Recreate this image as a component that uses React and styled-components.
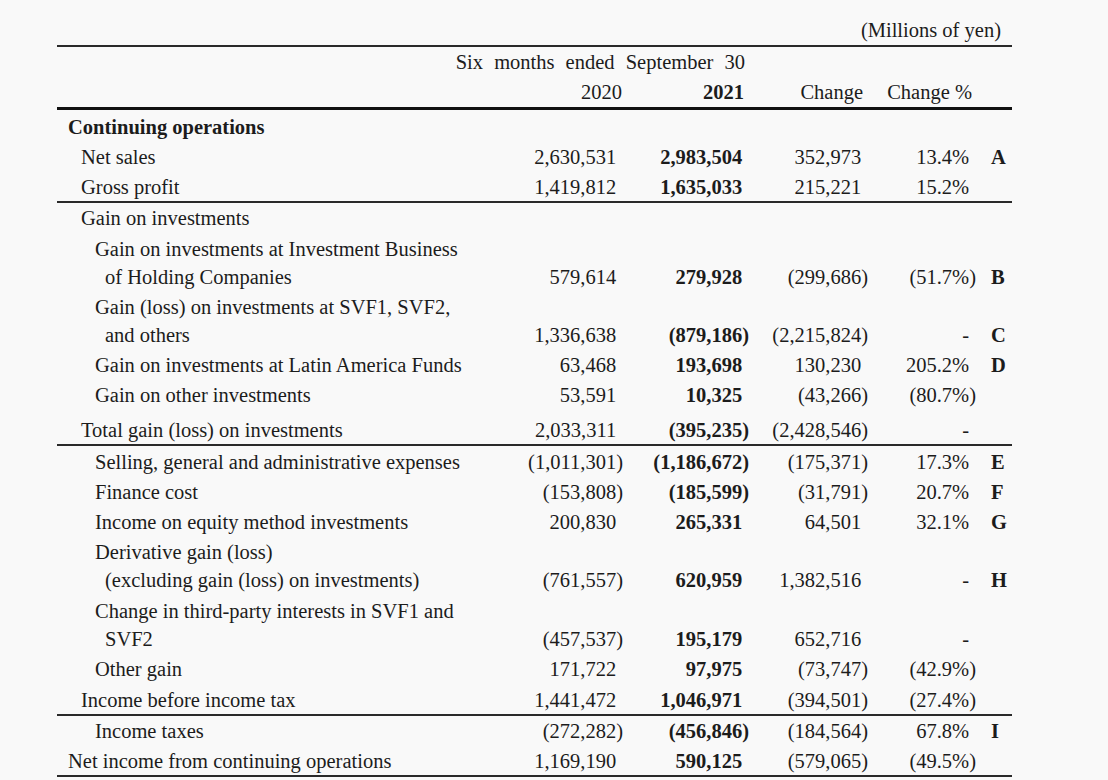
import React from 'react'
import styled, { createGlobalStyle } from 'styled-components'

const GlobalStyle = createGlobalStyle`
  html, body {
    margin: 0;
    background: #f9f9f9;
  }
  body {
    font-family: "Liberation Serif", "Times New Roman", serif;
    color: #1c1c1c;
  }
`

const Page = styled.div`
  width: 1108px;
  height: 780px;
  padding: 15px 0 0 57px;
  box-sizing: border-box;
  overflow: hidden;
  font-size: 20.5px;
`

const Unit = styled.div`
  width: 955px;
  box-sizing: border-box;
  padding-right: 11px;
  text-align: right;
  line-height: 30px;
`

const Table = styled.table`
  width: 955px;
  table-layout: fixed;
  border-collapse: collapse;
  border-top: 2px solid #2a2a2a;
`

const HeadRow = styled.tr`
  border-bottom: ${props => (props.$thick ? '3px solid #111' : 'none')};
`

const HeadCell = styled.th`
  padding: 0 ${props => props.$pad || 0}px 0 0;
  line-height: 30px;
  text-align: right;
  font-weight: ${props => (props.$bold ? 700 : 400)};
  word-spacing: ${props => props.$spread || 0}px;
  white-space: nowrap;
`

const Row = styled.tr`
  border-bottom: ${props => (props.$rule ? '2px solid #2a2a2a' : 'none')};

  & > td {
    padding-top: ${props => 1 + (props.$top || 0)}px;
    padding-bottom: ${props => (props.$rule ? 0 : 1)}px;
  }
`

const LEVEL_PAD = [11, 24, 38]

const LabelCell = styled.td`
  padding-left: ${props => LEVEL_PAD[props.$level] + 10}px;
  text-indent: -10px;
  line-height: 28px;
  vertical-align: bottom;
  font-weight: ${props => (props.$bold ? 700 : 400)};
  white-space: nowrap;
`

const NumCell = styled.td`
  padding: 0;
  line-height: 28px;
  text-align: right;
  vertical-align: bottom;
  font-weight: ${props => (props.$bold ? 700 : 400)};
  white-space: nowrap;
`

const Spacer = styled.span`
  visibility: hidden;
`

const NoteCell = styled.td`
  padding: 0 0 0 15px;
  line-height: 28px;
  vertical-align: bottom;
  font-weight: 700;
`

const ROWS = [
  { label: 'Continuing operations', level: 0, bold: true, top: 2 },
  { label: 'Net sales', level: 1, v: ['2,630,531', '2,983,504', '352,973', '13.4%'], note: 'A' },
  { label: 'Gross profit', level: 1, v: ['1,419,812', '1,635,033', '215,221', '15.2%'], rule: true },
  { label: 'Gain on investments', level: 1, top: 0 },
  {
    label: ['Gain on investments at Investment Business', 'of Holding Companies'],
    level: 2,
    v: ['579,614', '279,928', '(299,686)', '(51.7%)'],
    note: 'B',
    top: 1,
  },
  {
    label: ['Gain (loss) on investments at SVF1, SVF2,', 'and others'],
    level: 2,
    v: ['1,336,638', '(879,186)', '(2,215,824)', '-'],
    note: 'C',
  },
  { label: 'Gain on investments at Latin America Funds', level: 2, v: ['63,468', '193,698', '130,230', '205.2%'], note: 'D' },
  { label: 'Gain on other investments', level: 2, v: ['53,591', '10,325', '(43,266)', '(80.7%)'] },
  { label: 'Total gain (loss) on investments', level: 1, v: ['2,033,311', '(395,235)', '(2,428,546)', '-'], top: 5, rule: true },
  {
    label: 'Selling, general and administrative expenses',
    level: 2,
    v: ['(1,011,301)', '(1,186,672)', '(175,371)', '17.3%'],
    note: 'E',
    top: 1,
  },
  { label: 'Finance cost', level: 2, v: ['(153,808)', '(185,599)', '(31,791)', '20.7%'], note: 'F' },
  { label: 'Income on equity method investments', level: 2, v: ['200,830', '265,331', '64,501', '32.1%'], note: 'G' },
  {
    label: ['Derivative gain (loss)', '(excluding gain (loss) on investments)'],
    level: 2,
    v: ['(761,557)', '620,959', '1,382,516', '-'],
    note: 'H',
  },
  {
    label: ['Change in third-party interests in SVF1 and', 'SVF2'],
    level: 2,
    v: ['(457,537)', '195,179', '652,716', '-'],
    top: 1,
  },
  { label: 'Other gain', level: 2, v: ['171,722', '97,975', '(73,747)', '(42.9%)'] },
  {
    label: 'Income before income tax',
    level: 1,
    v: ['1,441,472', '1,046,971', '(394,501)', '(27.4%)'],
    top: 1,
    rule: true,
  },
  { label: 'Income taxes', level: 2, v: ['(272,282)', '(456,846)', '(184,564)', '67.8%'], note: 'I', top: 0 },
  {
    label: 'Net income from continuing operations',
    level: 0,
    v: ['1,169,190', '590,125', '(579,065)', '(49.5%)'],
    rule: true,
  },
]

// closing paren of negatives hangs past the digits, so positives get a hidden one
const Amount = ({ value }) =>
  value.endsWith(')') ? value : (
    <>
      {value}
      <Spacer>)</Spacer>
    </>
  )

const Label = ({ text }) =>
  Array.isArray(text)
    ? text.map((line, i) => (
        <React.Fragment key={line}>
          {i > 0 && <br />}
          {line}
        </React.Fragment>
      ))
    : text

export default function App() {
  return (
    <Page>
      <GlobalStyle />
      <Unit>(Millions of yen)</Unit>
      <Table>
        <colgroup>
          <col style={{ width: 453 }} />
          <col style={{ width: 113 }} />
          <col style={{ width: 126 }} />
          <col style={{ width: 119 }} />
          <col style={{ width: 108 }} />
          <col style={{ width: 36 }} />
        </colgroup>
        <thead>
          <HeadRow>
            <HeadCell colSpan={3} $pad={4} $spread={6}>
              Six months ended September 30
            </HeadCell>
            <HeadCell />
            <HeadCell />
            <HeadCell />
          </HeadRow>
          <HeadRow $thick>
            <HeadCell />
            <HeadCell $pad={1}>2020</HeadCell>
            <HeadCell $bold $pad={5}>2021</HeadCell>
            <HeadCell $pad={5}>Change</HeadCell>
            <HeadCell $pad={4}>Change %</HeadCell>
            <HeadCell />
          </HeadRow>
        </thead>
        <tbody>
          {ROWS.map((row, i) => (
            <Row key={i} $rule={row.rule} $top={row.top}>
              <LabelCell $level={row.level} $bold={row.bold}>
                <Label text={row.label} />
              </LabelCell>
              {[0, 1, 2, 3].map(c => (
                <NumCell key={c} $bold={c === 1}>
                  {row.v && <Amount value={row.v[c]} />}
                </NumCell>
              ))}
              <NoteCell>{row.note}</NoteCell>
            </Row>
          ))}
        </tbody>
      </Table>
    </Page>
  )
}
